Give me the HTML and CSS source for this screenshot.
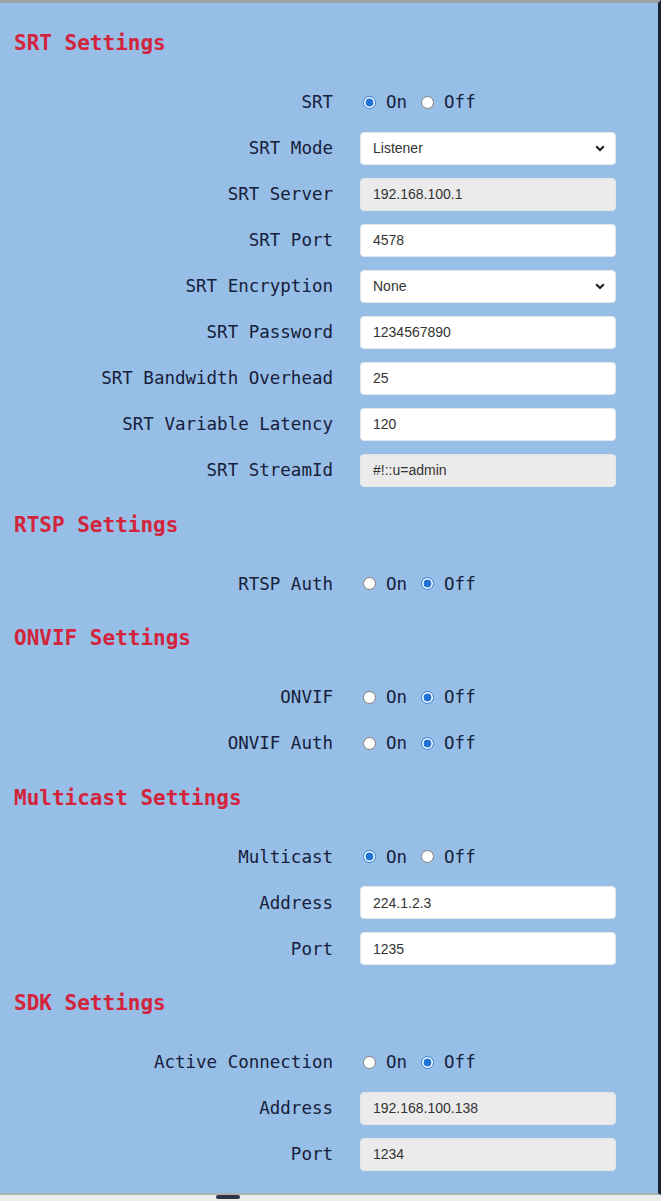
FILE: index.html
```html
<!DOCTYPE html>
<html lang="en">
<head>
    <meta charset="UTF-8">
    <meta name="viewport" content="width=device-width, initial-scale=1.0">
    <title>Stream Settings</title>
    <link rel="stylesheet" href="styles.css">
</head>
<body>
    <form class="panel">
        <section class="section">
            <h3 class="section-title">SRT Settings</h3>
            <div class="fields">
                <div class="row">
                    <span class="row-label">SRT</span>
                    <div class="radio-group">
                        <label class="opt"><input type="radio" name="srt" checked><span>On</span></label>
                        <label class="opt"><input type="radio" name="srt"><span>Off</span></label>
                    </div>
                </div>
                <div class="row">
                    <span class="row-label">SRT Mode</span>
                    <div class="select-wrap">
                        <select class="field-input">
                            <option>Listener</option>
                            <option>Caller</option>
                            <option>Rendezvous</option>
                        </select>
                        <svg class="chevron" width="10" height="7" viewBox="0 0 10 7"><path d="M1.2 1.2 L5 5 L8.8 1.2" fill="none" stroke="#1f1f1f" stroke-width="2.2"/></svg>
                    </div>
                </div>
                <div class="row">
                    <span class="row-label">SRT Server</span>
                    <input class="field-input" type="text" value="192.168.100.1" disabled>
                </div>
                <div class="row">
                    <span class="row-label">SRT Port</span>
                    <input class="field-input" type="text" value="4578">
                </div>
                <div class="row">
                    <span class="row-label">SRT Encryption</span>
                    <div class="select-wrap">
                        <select class="field-input">
                            <option>None</option>
                            <option>AES-128</option>
                            <option>AES-256</option>
                        </select>
                        <svg class="chevron" width="10" height="7" viewBox="0 0 10 7"><path d="M1.2 1.2 L5 5 L8.8 1.2" fill="none" stroke="#1f1f1f" stroke-width="2.2"/></svg>
                    </div>
                </div>
                <div class="row">
                    <span class="row-label">SRT Password</span>
                    <input class="field-input" type="text" value="1234567890">
                </div>
                <div class="row">
                    <span class="row-label">SRT Bandwidth Overhead</span>
                    <input class="field-input" type="text" value="25">
                </div>
                <div class="row">
                    <span class="row-label">SRT Variable Latency</span>
                    <input class="field-input" type="text" value="120">
                </div>
                <div class="row">
                    <span class="row-label">SRT StreamId</span>
                    <input class="field-input" type="text" value="#!::u=admin" disabled>
                </div>
            </div>
        </section>

        <section class="section">
            <h3 class="section-title">RTSP Settings</h3>
            <div class="fields">
                <div class="row">
                    <span class="row-label">RTSP Auth</span>
                    <div class="radio-group">
                        <label class="opt"><input type="radio" name="rtsp_auth"><span>On</span></label>
                        <label class="opt"><input type="radio" name="rtsp_auth" checked><span>Off</span></label>
                    </div>
                </div>
            </div>
        </section>

        <section class="section">
            <h3 class="section-title">ONVIF Settings</h3>
            <div class="fields">
                <div class="row">
                    <span class="row-label">ONVIF</span>
                    <div class="radio-group">
                        <label class="opt"><input type="radio" name="onvif"><span>On</span></label>
                        <label class="opt"><input type="radio" name="onvif" checked><span>Off</span></label>
                    </div>
                </div>
                <div class="row">
                    <span class="row-label">ONVIF Auth</span>
                    <div class="radio-group">
                        <label class="opt"><input type="radio" name="onvif_auth"><span>On</span></label>
                        <label class="opt"><input type="radio" name="onvif_auth" checked><span>Off</span></label>
                    </div>
                </div>
            </div>
        </section>

        <section class="section">
            <h3 class="section-title">Multicast Settings</h3>
            <div class="fields">
                <div class="row">
                    <span class="row-label">Multicast</span>
                    <div class="radio-group">
                        <label class="opt"><input type="radio" name="multicast" checked><span>On</span></label>
                        <label class="opt"><input type="radio" name="multicast"><span>Off</span></label>
                    </div>
                </div>
                <div class="row">
                    <span class="row-label">Address</span>
                    <input class="field-input" type="text" value="224.1.2.3">
                </div>
                <div class="row">
                    <span class="row-label">Port</span>
                    <input class="field-input" type="text" value="1235">
                </div>
            </div>
        </section>

        <section class="section">
            <h3 class="section-title">SDK Settings</h3>
            <div class="fields">
                <div class="row">
                    <span class="row-label">Active Connection</span>
                    <div class="radio-group">
                        <label class="opt"><input type="radio" name="sdk_active"><span>On</span></label>
                        <label class="opt"><input type="radio" name="sdk_active" checked><span>Off</span></label>
                    </div>
                </div>
                <div class="row">
                    <span class="row-label">Address</span>
                    <input class="field-input" type="text" value="192.168.100.138" disabled>
                </div>
                <div class="row">
                    <span class="row-label">Port</span>
                    <input class="field-input" type="text" value="1234" disabled>
                </div>
            </div>
        </section>
    </form>
    <div class="scrollbar"><div class="scroll-thumb"></div></div>
</body>
</html>
```

FILE: styles.css
```css
body {
    margin: 0;
    background-color: #fff;
    font-family: "DejaVu Sans Mono", monospace;
    color: #17203a;
}
.panel {
    width: 658px;
    background-color: #96bee6;
    border-top: 3px solid #9ba3a2;
    border-right: 3px solid #1c2331;
    border-bottom: 2px solid #aab1b0;
    padding: 28px 0 22.5px;
}
.section + .section {
    margin-top: 26px;
}
.section-title {
    margin: 0 0 30.5px;
    padding-left: 14px;
    font-size: 21px;
    line-height: 24px;
    font-weight: bold;
    color: #d3243b;
}
.fields {
    display: flex;
    flex-direction: column;
    gap: 13px;
}
.row {
    display: grid;
    grid-template-columns: 333px 256px;
    column-gap: 27px;
    height: 33px;
    align-items: center;
}
.row-label {
    text-align: right;
    font-size: 17.5px;
    white-space: nowrap;
}
.field-input {
    width: 256px;
    height: 33px;
    box-sizing: border-box;
    margin: 0;
    padding: 0 12px;
    border: 1px solid #e3e8ee;
    border-radius: 4px;
    background-color: #fff;
    font-family: "Liberation Sans", Arial, sans-serif;
    font-size: 14px;
    color: #333;
    outline: none;
}
.field-input:disabled {
    background-color: #ebebeb;
    border-color: #e4e6e8;
    color: #333;
    -webkit-text-fill-color: #333;
}
select.field-input {
    appearance: none;
    -webkit-appearance: none;
}
.select-wrap {
    position: relative;
    height: 33px;
}
.chevron {
    position: absolute;
    right: 11px;
    top: 13px;
    pointer-events: none;
}
.radio-group {
    display: flex;
    align-items: center;
    font-size: 17.5px;
}
.opt {
    display: inline-flex;
    align-items: center;
    gap: 10px;
    margin-right: 11px;
}
.opt input {
    width: 13px;
    height: 13px;
    margin: 0 0 0 3px;
    accent-color: #1f74d6;
}
.scrollbar {
    height: 6px;
    width: 661px;
    background-color: #eceeed;
}
.scroll-thumb {
    width: 24px;
    height: 4px;
    margin-left: 216px;
    border-radius: 2px;
    background-color: #2c3342;
}
```
